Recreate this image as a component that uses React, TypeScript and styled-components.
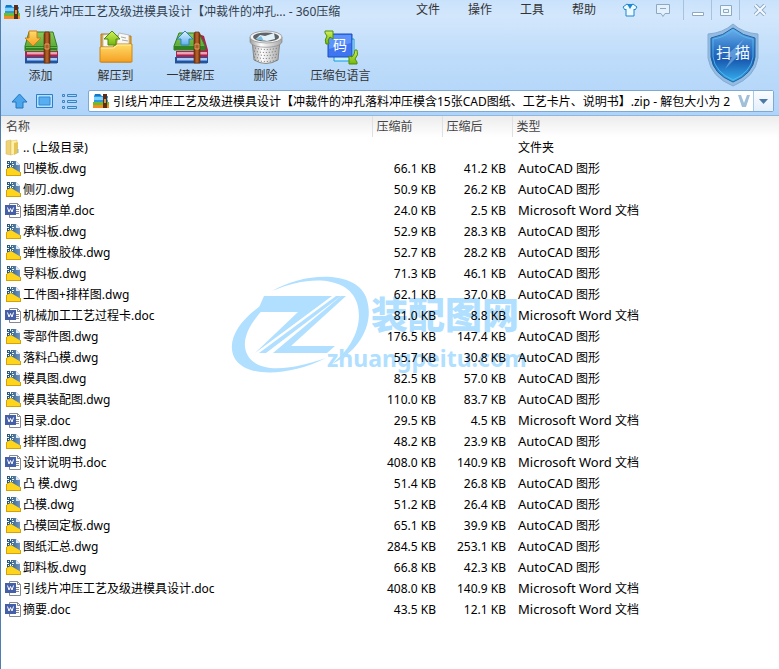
import React from "react";
import styled, { createGlobalStyle } from "styled-components";

const Global = createGlobalStyle`
  *, *::before, *::after { box-sizing: border-box; }
  body { margin: 0; background: #fff; }
  body, button, input, table {
    font: 12px/18px "Noto Sans", "Noto Sans CJK SC", sans-serif;
  }
  button { padding: 0; border: 0; background: none; color: inherit; cursor: pointer; }
  svg { display: block; flex: none; }
`;

const Window = styled.div`
  min-height: 100vh;
  border-left: 1px solid #4f7fae;
  background: #fff;
`;

const Chrome = styled.header`
  height: 116px;
  background: linear-gradient(#c9e2fb 0, #d3e7fc 16px, #bedcfa 58px, #b0d4f9 100%);
  border-bottom: 1px solid #8fb9dc;
  color: #333;
`;

const TitleBar = styled.div`
  display: flex;
  height: 24px;
  padding-left: 3px;
`;

const Title = styled.h1`
  display: flex;
  align-items: center;
  gap: 3px;
  flex: 1;
  margin: 0;
  font-size: 12px;
  font-weight: 400;
  white-space: nowrap;
  color: #32414f;
`;

const Menu = styled.nav`
  display: flex;
  height: 20px;
  gap: 28px;
  margin-right: 20px;
`;

const WindowButtons = styled.div`
  display: flex;
  height: 20px;
`;

const WindowButton = styled.button<{ $w: number; $divider?: boolean }>`
  display: grid;
  place-items: center;
  width: ${(p) => p.$w}px;
  border-left: 1px solid ${(p) => (p.$divider ? "#a5c2de" : "transparent")};
`;

const Tools = styled.div`
  display: flex;
  height: 64px;
  padding: 2px 18px 0 2px;
`;

const ToolButton = styled.button`
  display: flex;
  flex-direction: column;
  align-items: center;
  gap: 2px;
  width: 75px;
  height: 62px;
  padding-top: 3px;
  white-space: nowrap;
`;

const ScanButton = styled.button`
  display: grid;
  width: 56px;
  height: 66px;
  margin: -4px 0 0 auto;
  place-items: center;
  color: #f2f7ff;
  font-size: 15px;
  > * { grid-area: 1 / 1; }
  > span { margin-bottom: 6px; z-index: 1; }
`;

const AddressRow = styled.div`
  display: flex;
  align-items: center;
  gap: 8px;
  height: 26px;
  padding: 0 5px 0 10px;
`;

const ViewButton = styled.button`
  display: block;
  width: 17px;
  height: 18px;
`;

const AddressBox = styled.div`
  display: flex;
  align-items: center;
  flex: 1;
  min-width: 0;
  height: 22px;
  margin-left: 2px;
  padding-left: 4px;
  border: 1px solid #7da9d2;
  border-radius: 2px;
  background: #fff;
`;

const AddressInput = styled.input`
  flex: 1;
  min-width: 0;
  height: 20px;
  margin-left: 3px;
  padding: 0;
  border: 0;
  outline: 0;
  background: transparent;
  color: #000;
`;

const DropButton = styled.button`
  display: grid;
  place-items: center;
  width: 20px;
  height: 20px;
  margin-left: 3px;
  border-left: 1px solid #a9c9e8;
  background: linear-gradient(#fafcff, #e4effb);
`;

const Listing = styled.main`
  position: relative;
  isolation: isolate;
`;

const FileTable = styled.table`
  width: 100%;
  table-layout: fixed;
  border-collapse: collapse;
  color: #000;
`;

const Col = styled.col<{ $w?: number }>`
  width: ${(p) => (p.$w ? p.$w + "px" : "auto")};
`;

const HeadCell = styled.th`
  height: 21px;
  padding: 0 0 0 5px;
  background: linear-gradient(#ececec, #fff);
  color: #444;
  font-weight: 400;
  text-align: left;
  & + & {
    padding-left: 4px;
    border-left: 1px solid #e0e0e0;
  }
`;

const Cell = styled.td<{ $kind: "name" | "size" | "type" }>`
  height: 21px;
  padding: ${(p) => ({ name: "0 0 0 4px", size: "0 6px 0 0", type: "0 0 0 6px" })[p.$kind]};
  text-align: ${(p) => (p.$kind === "size" ? "right" : "left")};
  white-space: nowrap;
`;

const FileName = styled.div`
  display: flex;
  align-items: center;
  gap: 1px;
`;

const Program = styled.span`
  font-size: 13px;
`;

const Watermark = styled.div`
  position: absolute;
  z-index: -1;
  left: 229px;
  top: 159px;
  display: flex;
  color: #b0dfff;
`;

const WatermarkText = styled.div`
  display: flex;
  flex-direction: column;
  margin: 18px 0 0 -43px;
  font-weight: 700;
  white-space: nowrap;
`;

const WatermarkName = styled.span`
  padding-left: 44px;
  font: 900 37px/40px "Noto Sans CJK SC", sans-serif;
`;

const WatermarkSite = styled.span`
  font: 700 23px/30px "Noto Sans", sans-serif;
  margin-top: 10px;
`;

const ArchiveIcon = () => (
  <svg width="17" height="16" viewBox="0 0 17 16">
    <path d="M1 3l1-2h5l2 2h6v6H1z" fill="#2a9be6" />
    <path d="M2 1h5l1 2H2z" fill="#1676c4" />
    <path d="M1 4h8l6 1v2H1z" fill="#7fd0fa" />
    <path d="M0 9h16v3H0z" fill="#72ba2c" />
    <path d="M0 12h16v3H0z" fill="#f58c22" />
    <path d="M10 1h4v14h-4z" fill="#5b2c16" />
    <path d="M11 6h2v4h-2z" fill="#d69345" />
  </svg>
);

const Defs = () => (
  <defs>
    <linearGradient id="green" x2="0" y2="1"><stop stopColor="#8ccb58" /><stop offset=".7" stopColor="#5fae3d" /><stop offset="1" stopColor="#b4df7e" /></linearGradient>
    <linearGradient id="gold" x2="0" y2="1"><stop stopColor="#ffdc68" /><stop offset="1" stopColor="#f5a024" /></linearGradient>
    <linearGradient id="sky" x2="0" y2="1"><stop stopColor="#e0f3ff" /><stop offset="1" stopColor="#5eaef0" /></linearGradient>
    <linearGradient id="lime" x2="0" y2="1"><stop stopColor="#d4f25a" /><stop offset="1" stopColor="#73b60c" /></linearGradient>
    <linearGradient id="strap"><stop stopColor="#6e2d0c" /><stop offset=".5" stopColor="#bd6a2c" /><stop offset="1" stopColor="#6e2d0c" /></linearGradient>
    <linearGradient id="metal"><stop stopColor="#9a9a9a" /><stop offset=".35" stopColor="#fff" /><stop offset="1" stopColor="#a5a5a5" /></linearGradient>
  </defs>
);

const Books = ({ open }: { open?: boolean }) => (
  <>
    <path d="M2 34h32v1H2z" fill="#567898" opacity=".6" />
    <path d="M2 28h33v6H2z" fill="#24529e" />
    <path d="M4 29h30v2H4z" fill="#a9cbf3" />
    <path d="M4 31h30v1H4z" fill="#5d94e0" />
    <path d={open ? "M26 5l5 2 4 14v7H3v-6h23z" : "M2 22h33v6H2z"} fill="#a8264b" />
    <path d="M4 23h30v2H4z" fill="#e9a3b7" />
    <path d="M4 25h30v1H4z" fill="#d8587c" />
    {open ? (
      <>
        <path d="M6 4h20l6 13v4H1v-4z" fill="url(#green)" stroke="#357c20" />
        <path d="M1 17h31v4H1z" fill="#2f8122" />
      </>
    ) : (
      <>
        <path d="M6 3h24l4 14v5H2v-5z" fill="url(#green)" stroke="#357c20" />
        <path d="M2 17h32v4H2z" fill="#2f8122" />
        <path d="M3 18h31v1H3z" fill="#6db64b" />
      </>
    )}
    <path d="M21 5l1-2h4l1 2v29h-6z" fill="url(#strap)" stroke="#6b2e0e" strokeWidth=".7" />
    <path d="M22 15h4v5h-4z" fill="none" stroke="#eeb872" strokeWidth=".8" />
  </>
);

const AddIcon = () => (
  <svg width="36" height="36" viewBox="0 0 36 36">
    <Defs />
    <Books />
    <path d="M6 2h8v7h4l-8 8-8-8h4z" fill="url(#gold)" stroke="#d47a16" />
  </svg>
);

const ExtractIcon = () => (
  <svg width="36" height="36" viewBox="0 0 36 36">
    <path d="M3 5h9l3 2h18v26H3z" fill="#e8a72c" stroke="#b97916" />
    <path d="M5 6l8-1 3 13H5zM21 4l10 2v12H18z" fill="#f8f8f6" stroke="#a7a7a0" strokeWidth=".7" />
    <path d="M23 8l5 1M24 11l6 1" stroke="#aaa" />
    <path d="M2 18h13l3-3h16v18H2z" fill="url(#gold)" stroke="#cf8618" />
    <path d="M3 19h13l3-3h14" fill="none" stroke="#fff0a8" />
    <path d="M10 16V10H6l8-8 8 8h-4v6z" fill="url(#lime)" stroke="#4b8a08" />
  </svg>
);

const UnpackIcon = () => (
  <svg width="36" height="36" viewBox="0 0 36 36">
    <Books open />
    <path d="M8 16V10H4l8-8 8 8h-4v6z" fill="url(#sky)" stroke="#2d83ca" />
  </svg>
);

const BinIcon = () => (
  <svg width="36" height="36" viewBox="0 0 36 36">
    <path d="M4 11h28l-2 20q-12 7-24 0z" fill="url(#metal)" stroke="#888" />
    {[0, 1, 2, 3, 4].map((r) => (
      <path key={r} d={`M${r % 2 ? 6 : 7} ${19 + r * 3}q11 3 23 0`} fill="none" stroke="#666" strokeWidth="1" strokeDasharray="1 2" />
    ))}
    <path d="M2 8v5c2 7 30 7 32 0V8z" fill="url(#metal)" stroke="#888" strokeWidth=".7" />
    <ellipse cx="18" cy="8" rx="16" ry="6" fill="#f4f4f4" stroke="#8a8a8a" strokeWidth=".7" />
    <ellipse cx="18" cy="8" rx="13" ry="4.500" fill="#5d656a" />
    <path d="M8 10l4-4 5 1 9-3 1 6-8 2z" fill="#e3f2f9" />
    <path d="M8 10l5-3 3 5z" fill="#79bde1" />
  </svg>
);

const LanguageIcon = () => (
  <svg width="36" height="36" viewBox="0 0 36 36">
    <path d="M11 10h20v22H11z" fill="#c5f1ff" stroke="#159ae2" />
    <path d="M5 5h24v23H5z" fill="#3f75f0" stroke="#1851bb" />
    <path d="M6 6h22v8L6 20z" fill="#5d94fb" />
    <text x="17" y="21" fill="#fff" fontSize="14" textAnchor="middle" fontFamily="Noto Sans CJK SC, sans-serif">码</text>
    <path d="M3 15q-2-4 1-8L2 4V2h8v8L7 8q-3 3-1 7z" fill="url(#lime)" stroke="#4c8d0c" />
    <path d="M34 21q2 5-2 9l2 3v2h-8v-8l3 1q3-3 3-7z" fill="url(#lime)" stroke="#4c8d0c" />
  </svg>
);

const ShieldIcon = () => (
  <svg width="54" height="64" viewBox="0 0 54 64">
    <defs>
      <linearGradient id="shield" x2="0" y2="1">
        <stop stopColor="#6db2ee" /><stop offset=".4" stopColor="#2a72c4" /><stop offset=".6" stopColor="#1a5cb2" /><stop offset="1" stopColor="#37b1ef" />
      </linearGradient>
    </defs>
    <path d="M27 1Q37 10 52 11v24Q49 54 27 63 5 54 2 35V11Q17 10 27 1z" fill="#94bce2" stroke="#84add5" />
    <path d="M27 5Q37 13 49 15v19Q47 51 27 59 7 51 5 34V15Q17 13 27 5z" fill="url(#shield)" stroke="#1f5f9f" />
    <path d="M27 7Q37 15 47 16v18Q45 49 27 57 9 49 7 34V16Q17 15 27 7z" fill="none" stroke="#59bdf3" strokeWidth=".8" />
    <path d="M38 16L19 34h7l-7 12 18-18h-7z" fill="#86b7e9" opacity=".6" />
  </svg>
);

const FolderIcon = () => (
  <svg width="17" height="17" viewBox="-1 0 17 17">
    <path d="M0 2l5-1v15l-5-1z" fill="#efd477" stroke="#d2b44f" strokeWidth=".5" />
    <path d="M5 2l6-1v13l-6 2z" fill="#fff0a9" stroke="#d8bc59" strokeWidth=".5" />
    <path d="M8 4l4-1v11l-4 2z" fill="#e6c557" />
    <path d="M12 10v4" stroke="#7abce0" />
  </svg>
);

const DwgIcon = () => (
  <svg width="17" height="17" viewBox="-1 0 17 17">
    <defs>
      <linearGradient id="dwg"><stop stopColor="#23506f" /><stop offset="1" stopColor="#6f94c0" /></linearGradient>
    </defs>
    <path d="M1 1h9l4 4v9H1z" fill="url(#dwg)" />
    <path d="M10 1l4 4h-4z" fill="#dce8f4" />
    <path d="M0 9l5-2 5 3 5 3v3H0z" fill="#ffd51c" />
    <path d="M0 15h15v1H0zM14 12h1v4h-1zM0 9h1v7H0z" fill="#d3a10a" />
    <path d="M4 1h1v2H4zM4 5h1v2H4zM1 4h2v1H1zM6 4h2v1H6zM2 2h1v1H2zM6 2h1v1H6zM2 6h1v1H2zM6 6h1v1H6z" fill="#f2f9ff" />
  </svg>
);

const DocIcon = () => (
  <svg width="17" height="17" viewBox="0 0 17 17">
    <path d="M4.500 1.500h8l3 3v11h-11z" fill="#fff" stroke="#838a96" />
    <path d="M12.500 1.500v3h3M11 7.500h3M11 9.500h3M11 11.500h3" fill="none" stroke="#838a96" />
    <path d="M0 3h11v10H0z" fill="#4560a6" />
    <path d="M2.500 5.500L4 10l1.500-3.500L7 10l1.500-4.500" fill="none" stroke="#fff" />
  </svg>
);

const WatermarkLogo = () => (
  <svg width="140" height="104" viewBox="0 0 140 104" fill="#b0dfff">
    <path d="M42 16C76-4 126-4 136 22c10 27-8 55-34 67 19-15 32-38 25-61C119 2 80-1 42 16z" />
    <path d="M46 22C15 37-5 62 4 82c11 22 56 19 92 1-37 13-67 15-78-2-10-17 5-39 28-59z" />
    <path d="M34 21h68L25 78l43-41H27z" />
    <path d="M106 21h5L36 78h-7z" />
    <path d="M111 21h5L61 71h44l-8 7H43z" />
  </svg>
);

const tools = [
  { label: "添加", Icon: AddIcon },
  { label: "解压到", Icon: ExtractIcon },
  { label: "一键解压", Icon: UnpackIcon },
  { label: "删除", Icon: BinIcon },
  { label: "压缩包语言", Icon: LanguageIcon },
];

const files: [string, string, string][] = [
  ["凹模板.dwg", "66.1", "41.2"],
  ["侧刃.dwg", "50.9", "26.2"],
  ["插图清单.doc", "24.0", "2.5"],
  ["承料板.dwg", "52.9", "28.3"],
  ["弹性橡胶体.dwg", "52.7", "28.2"],
  ["导料板.dwg", "71.3", "46.1"],
  ["工件图+排样图.dwg", "62.1", "37.0"],
  ["机械加工工艺过程卡.doc", "81.0", "8.8"],
  ["零部件图.dwg", "176.5", "147.4"],
  ["落料凸模.dwg", "55.7", "30.8"],
  ["模具图.dwg", "82.5", "57.0"],
  ["模具装配图.dwg", "110.0", "83.7"],
  ["目录.doc", "29.5", "4.5"],
  ["排样图.dwg", "48.2", "23.9"],
  ["设计说明书.doc", "408.0", "140.9"],
  ["凸 模.dwg", "51.4", "26.8"],
  ["凸模.dwg", "51.2", "26.4"],
  ["凸模固定板.dwg", "65.1", "39.9"],
  ["图纸汇总.dwg", "284.5", "253.1"],
  ["卸料板.dwg", "66.8", "42.3"],
  ["引线片冲压工艺及级进模具设计.doc", "408.0", "140.9"],
  ["摘要.doc", "43.5", "12.1"],
];

export default function App() {
  return (
    <Window>
      <Global />
      <Chrome>
        <TitleBar>
          <Title><ArchiveIcon />引线片冲压工艺及级进模具设计【冲裁件的冲孔... - 360压缩</Title>
          <Menu>
            {["文件", "操作", "工具", "帮助"].map((m) => <button key={m}>{m}</button>)}
          </Menu>
          <WindowButtons>
            <WindowButton $w={26} aria-label="皮肤">
              <svg width="16" height="14" viewBox="0 0 16 14"><path d="M5 1L1 4l2 3 1-1v7h8V6l1 1 2-3-4-3-3 2z" fill="#eef8ff" stroke="#1c87d3" /><path d="M5 1l3 5 3-5z" fill="#1c87d3" /></svg>
            </WindowButton>
            <WindowButton $w={41} aria-label="反馈">
              <svg width="14" height="13" viewBox="0 0 14 13"><path d="M.5.5h13v9H9l-2 3-2-3H.5zM4 4.500h6" fill="#e4f0fb" stroke="#8ca9c4" /></svg>
            </WindowButton>
            <WindowButton $w={28} $divider aria-label="最小化">
              <svg width="12" height="12" viewBox="0 0 12 12"><path d="M.5 8.500h11v3H.5z" fill="#fff" stroke="#8ca9c4" /></svg>
            </WindowButton>
            <WindowButton $w={28} $divider aria-label="最大化">
              <svg width="12" height="11" viewBox="0 0 12 11"><path d="M.5.5h11v10H.5zM3.500 4.500h5v3h-5z" fill="#eff7ff" stroke="#8ca9c4" /></svg>
            </WindowButton>
            <WindowButton $w={40} $divider aria-label="关闭">
              <svg width="12" height="12" viewBox="0 0 12 12"><path d="M1 1l10 10M11 1L1 11" stroke="#8ca9c4" strokeWidth="4" /><path d="M1 1l10 10M11 1L1 11" stroke="#f5faff" strokeWidth="2" /></svg>
            </WindowButton>
          </WindowButtons>
        </TitleBar>
        <Tools>
          {tools.map(({ label, Icon }) => (
            <ToolButton key={label}><Icon />{label}</ToolButton>
          ))}
          <ScanButton><ShieldIcon /><span>扫 描</span></ScanButton>
        </Tools>
        <AddressRow>
          <ViewButton aria-label="向上">
            <svg width="17" height="18" viewBox="0 0 17 18"><path d="M8.500 2L1 10h4v6h7v-6h4z" fill="#4ba5ec" stroke="#2574bc" /></svg>
          </ViewButton>
          <ViewButton aria-label="图标视图">
            <svg width="17" height="18" viewBox="0 0 17 18"><path d="M.5 2.500h16v13H.5z" fill="#b9e1ff" stroke="#2b80c9" /><path d="M3 5h11v8H3z" fill="#58aef0" stroke="#318bd5" /></svg>
          </ViewButton>
          <ViewButton aria-label="列表视图">
            <svg width="17" height="18" viewBox="0 0 17 18"><path d="M1.500 2.500h2v2h-2zM6.500 2.500h9v2h-9zM1.500 8.500h2v2h-2zM6.500 8.500h9v2h-9zM1.500 14.500h2v2h-2zM6.500 14.500h9v2h-9z" fill="#a9d8fb" stroke="#3a83c4" /></svg>
          </ViewButton>
          <AddressBox>
            <ArchiveIcon />
            <AddressInput aria-label="地址" readOnly value="引线片冲压工艺及级进模具设计【冲裁件的冲孔落料冲压模含15张CAD图纸、工艺卡片、说明书】.zip - 解包大小为 2" />
            <svg width="12" height="12" viewBox="0 0 12 12"><path d="M0 0h3l3 8 3-8h3L8 12H4z" fill="#a0bfd8" /></svg>
            <DropButton aria-label="展开">
              <svg width="9" height="5" viewBox="0 0 9 5"><path d="M0 0h9L4.500 5z" fill="#4c78a8" /></svg>
            </DropButton>
          </AddressBox>
        </AddressRow>
      </Chrome>
      <Listing>
        <Watermark aria-hidden="true">
          <WatermarkLogo />
          <WatermarkText>
            <WatermarkName>装配图网</WatermarkName>
            <WatermarkSite>zhuangpeitu.com</WatermarkSite>
          </WatermarkText>
        </Watermark>
        <FileTable>
          <colgroup><Col $w={371} /><Col $w={70} /><Col $w={70} /><Col /></colgroup>
          <thead>
            <tr>{["名称", "压缩前", "压缩后", "类型"].map((h) => <HeadCell key={h} scope="col">{h}</HeadCell>)}</tr>
          </thead>
          <tbody>
            <tr>
              <Cell $kind="name"><FileName><FolderIcon />.. (上级目录)</FileName></Cell>
              <Cell $kind="size" /><Cell $kind="size" /><Cell $kind="type">文件夹</Cell>
            </tr>
            {files.map(([name, before, after]) => {
              const doc = name.endsWith(".doc");
              return (
                <tr key={name}>
                  <Cell $kind="name"><FileName>{doc ? <DocIcon /> : <DwgIcon />}{name}</FileName></Cell>
                  <Cell $kind="size">{before} KB</Cell>
                  <Cell $kind="size">{after} KB</Cell>
                  <Cell $kind="type"><Program>{doc ? "Microsoft Word" : "AutoCAD"}</Program> {doc ? "文档" : "图形"}</Cell>
                </tr>
              );
            })}
          </tbody>
        </FileTable>
      </Listing>
    </Window>
  );
}
